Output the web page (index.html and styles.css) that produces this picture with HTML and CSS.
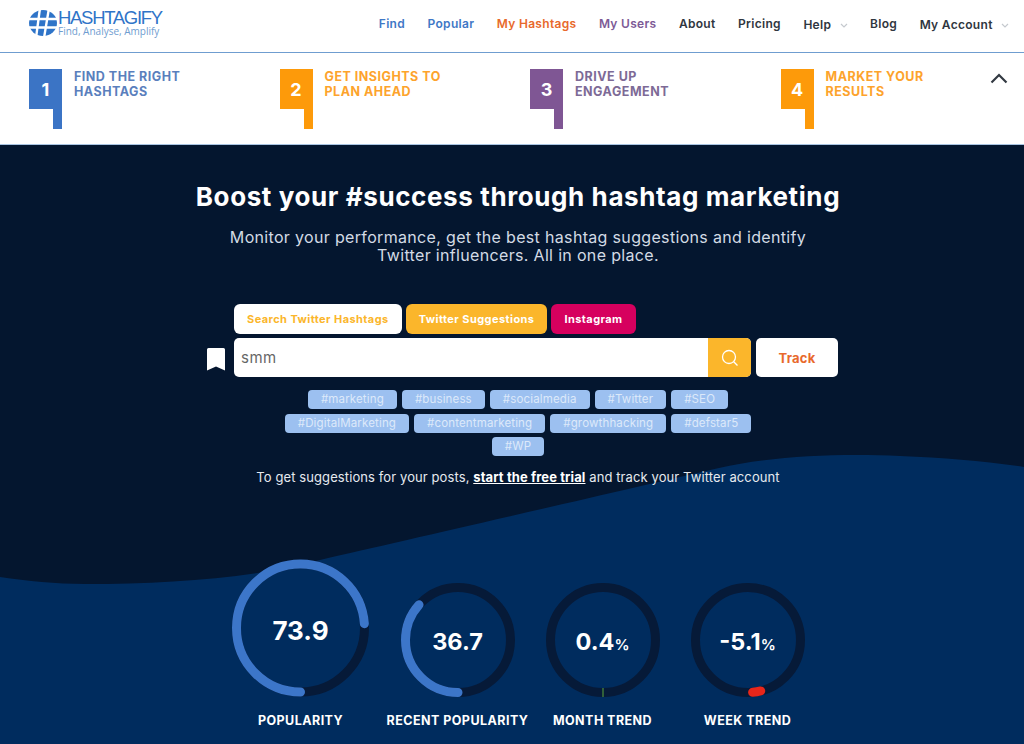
FILE: index.html
```html
<!DOCTYPE html>
<html lang="en">
<head>
    <meta charset="UTF-8">
    <meta name="viewport" content="width=device-width, initial-scale=1.0">
    <title>Hashtagify</title>
    <link rel="stylesheet" href="styles.css">
</head>
<body>
    <header class="topbar">
        <a class="logo">
            <svg class="logo-mark" width="28" height="27" viewBox="0 0 28 27">
                <ellipse cx="14" cy="13" rx="14" ry="13" fill="#2f74c8"/>
                <path d="M-1 9H29M-1 17.500H29M11 -2L7 28M20 -2L15 28" stroke="#fff" stroke-width="2.400" fill="none"/>
            </svg>
            <div class="logo-text">
                <div class="logo-name">HASHTAGIFY</div>
                <div class="logo-tag">Find, Analyse, Amplify</div>
            </div>
        </a>
        <nav class="nav">
            <a class="blue">Find</a>
            <a class="blue">Popular</a>
            <a class="orange">My Hashtags</a>
            <a class="purple">My Users</a>
            <a>About</a>
            <a>Pricing</a>
            <a class="drop low">Help <svg width="8" height="5" viewBox="0 0 8 5"><path d="M1 1l3 3 3-3" stroke="#c5c9ce" stroke-width="1.200" fill="none"/></svg></a>
            <a>Blog</a>
            <a class="drop low">My Account <svg width="8" height="5" viewBox="0 0 8 5"><path d="M1 1l3 3 3-3" stroke="#c5c9ce" stroke-width="1.200" fill="none"/></svg></a>
        </nav>
    </header>

    <section class="steps">
        <div class="step step-blue">
            <div class="flag"><span class="flag-num">1</span><span class="flag-tail"></span></div>
            <div class="step-title">FIND THE RIGHT<br>HASHTAGS</div>
        </div>
        <div class="step step-orange">
            <div class="flag"><span class="flag-num">2</span><span class="flag-tail"></span></div>
            <div class="step-title">GET INSIGHTS TO<br>PLAN AHEAD</div>
        </div>
        <div class="step step-purple">
            <div class="flag"><span class="flag-num">3</span><span class="flag-tail"></span></div>
            <div class="step-title">DRIVE UP<br>ENGAGEMENT</div>
        </div>
        <div class="step step-orange step-last">
            <div class="flag"><span class="flag-num">4</span><span class="flag-tail"></span></div>
            <div class="step-title">MARKET YOUR<br>RESULTS</div>
        </div>
        <svg class="collapse" width="18" height="11" viewBox="0 0 18 11"><path d="M1.500 9.500L9 2l7.500 7.500" stroke="#333a42" stroke-width="2.200" fill="none"/></svg>
    </section>

    <section class="hero">
        <svg class="wave" width="1024" height="599" viewBox="0 0 1024 599">
            <path d="M0 432C28 436 55 439 85 439C170 439 255 433 320 415C420 392 620 346 719 323C770 311 840 308 900 311C945 313 985 316 1024 322V599H0Z" fill="#002c5e"/>
        </svg>
        <div class="hero-inner">
            <h1>Boost your #success through hashtag marketing</h1>
            <p class="lead">Monitor your performance, get the best hashtag suggestions and identify<br>Twitter influencers. All in one place.</p>

            <div class="tabs">
                <a class="tab tab-active">Search Twitter Hashtags</a>
                <a class="tab tab-yellow">Twitter Suggestions</a>
                <a class="tab tab-pink">Instagram</a>
            </div>
            <div class="search-row">
                <svg class="bookmark" width="18" height="23" viewBox="0 0 18 23"><path d="M0 1.500Q0 0 1.500 0H16.500Q18 0 18 1.500V22.500L9 18.500L0 22.500Z" fill="#fff"/></svg>
                <div class="search-box">
                    <span class="search-text">smm</span>
                    <span class="search-btn">
                        <svg width="18" height="18" viewBox="0 0 18 18"><circle cx="8" cy="8" r="6.500" stroke="#fff" stroke-width="1.300" fill="none"/><path d="M12.700 12.700L16.500 16.500" stroke="#fff" stroke-width="1.300"/></svg>
                    </span>
                </div>
                <a class="track">Track</a>
            </div>
            <div class="tags">
                <a class="tag">#marketing</a>
                <a class="tag">#business</a>
                <a class="tag">#socialmedia</a>
                <a class="tag">#Twitter</a>
                <a class="tag">#SEO</a>
                <span class="tag-break"></span>
                <a class="tag">#DigitalMarketing</a>
                <a class="tag">#contentmarketing</a>
                <a class="tag">#growthhacking</a>
                <a class="tag">#defstar5</a>
                <span class="tag-break"></span>
                <a class="tag">#WP</a>
            </div>
            <p class="trial">To get suggestions for your posts, <a>start the free trial</a> and track your Twitter account</p>

            <div class="gauges">
                <div class="gauge gauge-big">
                    <svg width="137" height="138" viewBox="0 0 137 138">
                        <circle class="ring" cx="68.500" cy="69" r="64"/>
                        <circle class="arc arc-blue" cx="68.500" cy="69" r="64" pathLength="100" stroke-dasharray="73.900 100" transform="rotate(90 68.500 69)"/>
                    </svg>
                    <div class="gauge-value">73.9</div>
                    <div class="gauge-label">POPULARITY</div>
                </div>
                <div class="gauge">
                    <svg width="114" height="114" viewBox="0 0 114 114">
                        <circle class="ring" cx="57" cy="57" r="52.500"/>
                        <circle class="arc arc-blue" cx="57" cy="57" r="52.500" pathLength="100" stroke-dasharray="36.700 100" transform="rotate(90 57 57)"/>
                    </svg>
                    <div class="gauge-value">36.7</div>
                    <div class="gauge-label">RECENT POPULARITY</div>
                </div>
                <div class="gauge">
                    <svg width="114" height="114" viewBox="0 0 114 114">
                        <circle class="ring" cx="57" cy="57" r="52.500"/>
                        <path d="M57 105v9" stroke="#5aa53c" stroke-width="1"/>
                    </svg>
                    <div class="gauge-value">0.4<small>%</small></div>
                    <div class="gauge-label">MONTH TREND</div>
                </div>
                <div class="gauge">
                    <svg width="114" height="114" viewBox="0 0 114 114">
                        <circle class="ring" cx="57" cy="57" r="52.500"/>
                        <circle class="arc arc-red" cx="57" cy="57" r="52.500" pathLength="100" stroke-dasharray="2.500 100" transform="rotate(76 57 57)"/>
                    </svg>
                    <div class="gauge-value">-5.1<small>%</small></div>
                    <div class="gauge-label">WEEK TREND</div>
                </div>
            </div>
        </div>
    </section>
</body>
</html>
```

FILE: styles.css
```css
html, body {
    height: 744px;
    overflow: hidden;
}
body {
    font-family: Inter, "Open Sans", sans-serif;
    margin: 0;
    padding: 0;
    color: #2f3640;
    background: #fff;
}
.topbar {
    height: 52px;
    display: flex;
    justify-content: space-between;
    align-items: center;
    padding: 0 15px 0 29px;
    border-bottom: 1px solid #6f9dd0;
}
.logo {
    display: flex;
    align-items: center;
    gap: 1px;
    margin-top: -5px;
}
.logo-name {
    font-family: "Liberation Sans", sans-serif;
    font-size: 18.500px;
    line-height: 16px;
    letter-spacing: -1.300px;
    color: #2f74c8;
}
.logo-tag {
    font-family: "Open Sans", sans-serif;
    font-size: 10px;
    line-height: 11px;
    color: #6f9dd0;
}
.nav {
    display: flex;
    gap: 22.500px;
    font-size: 12px;
    font-weight: 600;
    letter-spacing: 0.300px;
    margin-top: -5px;
}
.nav .blue { color: #3f78c6; }
.nav .orange { color: #e8692c; }
.nav .purple { color: #7d5a96; }
.nav .low { position: relative; top: 1px; }
.drop svg { margin-left: 5px; vertical-align: middle; }

.steps {
    height: 91px;
    display: flex;
    padding-left: 29px;
    position: relative;
    border-bottom: 1px solid #a9c4e2;
}
.step {
    flex: none;
    width: 250.500px;
    display: flex;
    gap: 12px;
    padding-top: 16px;
}
.step-last {
    width: 200px;
}
.flag {
    width: 33px;
    display: flex;
    flex-direction: column;
    align-items: flex-end;
}
.flag-num {
    width: 33px;
    height: 40px;
    display: flex;
    align-items: center;
    justify-content: center;
    color: #fff;
    font-weight: 700;
    font-size: 18px;
}
.flag-tail {
    width: 9px;
    height: 20px;
}
.step-title {
    font-size: 12.500px;
    line-height: 15px;
    font-weight: 700;
    letter-spacing: 0.500px;
}
.step-blue .flag-num, .step-blue .flag-tail { background: #3b74c5; }
.step-blue .step-title { color: #5a7fbd; }
.step-orange .flag-num, .step-orange .flag-tail { background: #fd9a0a; }
.step-orange .step-title { color: #fda32c; }
.step-purple .flag-num, .step-purple .flag-tail { background: #7f5694; }
.step-purple .step-title { color: #7d6a96; }
.collapse {
    position: absolute;
    right: 16px;
    top: 20px;
}

.hero {
    height: 599px;
    position: relative;
    background: #04162f;
    color: #fff;
    overflow: hidden;
}
.wave {
    position: absolute;
    left: 0;
    top: 0;
}
.hero-inner {
    position: relative;
    display: flex;
    flex-direction: column;
    align-items: center;
    padding: 36px 0 0 12px;
}
h1 {
    margin: 0;
    font-size: 26px;
    line-height: 32px;
    font-weight: 700;
    letter-spacing: 0.600px;
}
.lead {
    margin: 15px 0 0;
    font-size: 16px;
    line-height: 18px;
    font-weight: 400;
    letter-spacing: 0.330px;
    text-align: center;
    color: #d3dbe5;
}
.tabs {
    display: flex;
    gap: 4px;
    margin: 40px 0 0 36px;
    width: 604px;
}
.tab {
    height: 30px;
    display: flex;
    align-items: center;
    padding: 0 13px;
    border-radius: 6px;
    font-size: 11px;
    font-weight: 700;
    letter-spacing: 0.430px;
}
.tab-active { background: #fff; color: #fbb62b; }
.tab-yellow { background: #fbb62b; color: #fff; }
.tab-pink { background: #d6005e; color: #fff; }
.search-row {
    display: flex;
    align-items: center;
    gap: 5px;
    margin: 4px 0 0 9px;
}
.bookmark {
    margin-right: 4px;
    margin-top: 3px;
}
.search-box {
    width: 517px;
    height: 39px;
    display: flex;
    justify-content: space-between;
    background: #fff;
    border-radius: 5px;
    overflow: hidden;
}
.search-text {
    font-size: 15px;
    line-height: 39px;
    color: #666;
    padding-left: 7px;
    letter-spacing: 0.500px;
}
.search-btn {
    width: 43px;
    display: flex;
    align-items: center;
    justify-content: center;
    background: #fbb62b;
}
.track {
    width: 82px;
    height: 39px;
    display: flex;
    align-items: center;
    justify-content: center;
    background: #fff;
    border-radius: 5px;
    color: #e8692c;
    font-size: 13px;
    font-weight: 700;
    letter-spacing: 0.200px;
}
.tags {
    display: flex;
    flex-wrap: wrap;
    justify-content: center;
    gap: 2.250px 5px;
    width: 604px;
    margin-top: 13px;
}
.tag-break {
    width: 100%;
    height: 0;
}
.tag {
    height: 19px;
    line-height: 19px;
    padding: 0 13px;
    border-radius: 4px;
    background: #9cc0f0;
    color: #dce9fa;
    font-size: 11.500px;
    letter-spacing: 0.150px;
}
.trial {
    margin: 12px 0 0;
    font-size: 13px;
    line-height: 18px;
    letter-spacing: 0.100px;
    color: #e6eaef;
}
.trial a {
    font-weight: 700;
    color: #fff;
    text-decoration: underline;
}
.gauges {
    display: flex;
    align-items: flex-end;
    justify-content: center;
    margin-top: 73px;
    width: 604px;
}
.gauge {
    position: relative;
    flex: none;
    width: 145px;
    display: flex;
    flex-direction: column;
    align-items: center;
}
.gauge-big {
    width: 169px;
}
.gauge svg {
    display: block;
}
.ring, .arc {
    fill: none;
    stroke-width: 9;
}
.ring { stroke: #061a38; }
.arc { stroke-linecap: round; }
.arc-blue { stroke: #3c76c9; }
.arc-red { stroke: #e8261a; }
.gauge-value {
    position: absolute;
    left: 0;
    right: 0;
    top: 44px;
    text-align: center;
    font-size: 23.500px;
    line-height: 30px;
    font-weight: 700;
}
.gauge-big .gauge-value {
    top: 57px;
    font-size: 26px;
}
.gauge-value small {
    font-size: 15px;
    font-weight: 600;
}
.gauge-label {
    margin-top: 14px;
    font-size: 12.500px;
    line-height: 20px;
    font-weight: 700;
    letter-spacing: 0.450px;
    white-space: nowrap;
}
```
